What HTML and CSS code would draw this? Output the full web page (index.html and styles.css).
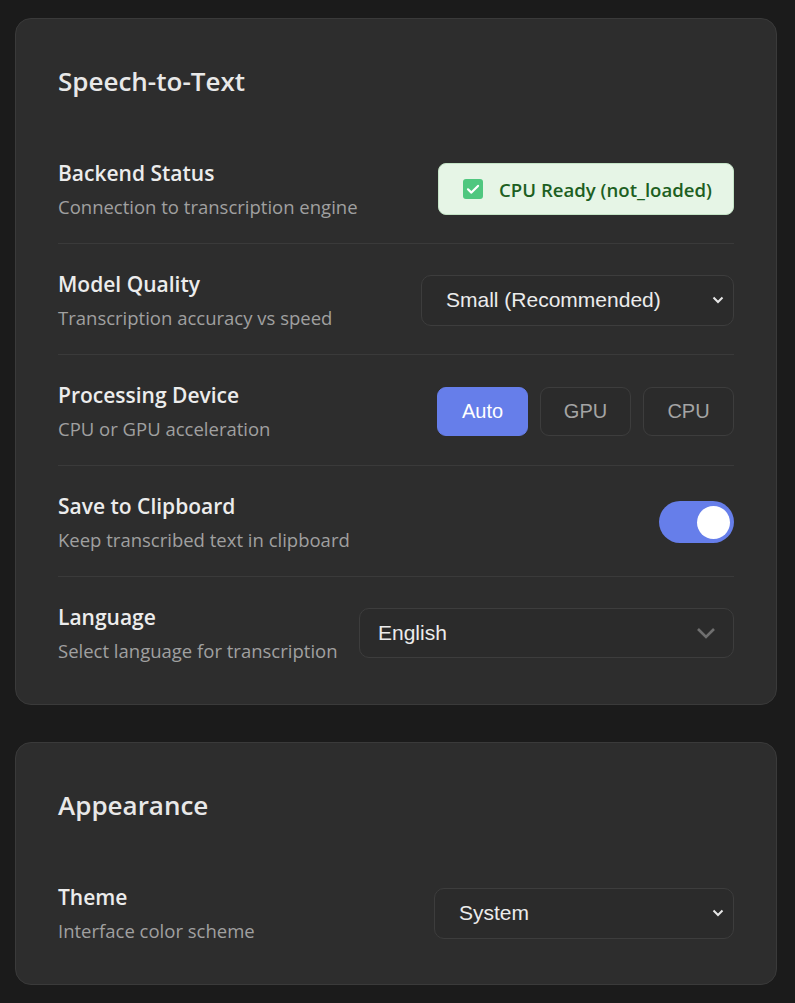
FILE: index.html
```html
<!DOCTYPE html>
<html lang="en">
<head>
<meta charset="utf-8">
<title>Settings</title>
<link rel="stylesheet" href="styles.css">
</head>
<body>
<main class="page">
  <section class="card">
    <h2 class="card-title">Speech-to-Text</h2>

    <div class="row">
      <div class="info">
        <div class="label">Backend Status</div>
        <div class="desc">Connection to transcription engine</div>
      </div>
      <div class="status">
        <svg class="check" width="20" height="20" viewBox="0 0 20 20" aria-hidden="true">
          <rect x="0" y="0" width="20" height="20" rx="3" fill="#4fc77f"/>
          <path d="M5 10.3 L8.4 13.6 L15 6.9" fill="none" stroke="#ffffff" stroke-width="2.2" stroke-linecap="round" stroke-linejoin="round"/>
        </svg>
        <span>CPU Ready (not_loaded)</span>
      </div>
    </div>

    <div class="row">
      <div class="info">
        <div class="label">Model Quality</div>
        <div class="desc">Transcription accuracy vs speed</div>
      </div>
      <div class="select select-model">
        <span>Small (Recommended)</span>
        <svg class="caret" width="12" height="8" viewBox="0 0 12 8" aria-hidden="true"><path d="M1.5 1.5 L6 6 L10.5 1.5" fill="none" stroke="#e6e6e6" stroke-width="2"/></svg>
      </div>
    </div>

    <div class="row">
      <div class="info">
        <div class="label">Processing Device</div>
        <div class="desc">CPU or GPU acceleration</div>
      </div>
      <div class="seg">
        <button class="seg-btn active">Auto</button>
        <button class="seg-btn">GPU</button>
        <button class="seg-btn">CPU</button>
      </div>
    </div>

    <div class="row">
      <div class="info">
        <div class="label">Save to Clipboard</div>
        <div class="desc">Keep transcribed text in clipboard</div>
      </div>
      <div class="toggle on"><span class="knob"></span></div>
    </div>

    <div class="row">
      <div class="info">
        <div class="label">Language</div>
        <div class="desc">Select language for transcription</div>
      </div>
      <div class="select select-lang">
        <span>English</span>
        <svg class="chev" width="20" height="12" viewBox="0 0 20 12" aria-hidden="true"><path d="M2 2 L10 10 L18 2" fill="none" stroke="#6f6f6f" stroke-width="2.6"/></svg>
      </div>
    </div>
  </section>

  <section class="card">
    <h2 class="card-title">Appearance</h2>
    <div class="row">
      <div class="info">
        <div class="label">Theme</div>
        <div class="desc">Interface color scheme</div>
      </div>
      <div class="select select-theme">
        <span>System</span>
        <svg class="caret" width="12" height="8" viewBox="0 0 12 8" aria-hidden="true"><path d="M1.5 1.5 L6 6 L10.5 1.5" fill="none" stroke="#e6e6e6" stroke-width="2"/></svg>
      </div>
    </div>
  </section>
</main>
</body>
</html>
```

FILE: styles.css
```css
* { box-sizing: border-box; }

html, body {
  margin: 0;
  background: #1b1b1b;
}

body {
  font-family: "Open Sans", "Noto Sans", sans-serif;
  color: #e8e8e8;
}

.page {
  display: flex;
  flex-direction: column;
  gap: 37px;
  padding: 18px 18px 18px 15px;
}

.card {
  background: #2d2d2d;
  border: 1px solid #3a3a3a;
  border-radius: 16px;
  padding: 42px 42px 40px 42px;
}

.card-title {
  margin: 0 0 32px;
  font-size: 26px;
  line-height: 40px;
  font-weight: 600;
  color: #e8e8e8;
}

.row {
  display: flex;
  align-items: center;
  justify-content: space-between;
  padding: 25px 0 23px;
  border-bottom: 1px solid #3a3a3a;
}

.row:last-child {
  border-bottom: none;
  padding-bottom: 0;
}

.info {
  display: flex;
  flex-direction: column;
  gap: 5px;
}

.label {
  font-size: 21px;
  line-height: 30px;
  font-weight: 600;
  color: #ececec;
}

.desc {
  font-size: 18.5px;
  line-height: 27px;
  color: #a0a0a0;
}

.status {
  display: flex;
  align-items: center;
  gap: 16px;
  height: 52px;
  padding: 0 21px 0 24px;
  background: #e6f5e6;
  border: 1px solid #c4e3c6;
  border-radius: 8px;
  color: #1d5f22;
  font-size: 18.6px;
  font-weight: 600;
}

.check { flex: none; }

.select {
  display: flex;
  align-items: center;
  justify-content: space-between;
  height: 51px;
  border: 1px solid #3d3d3d;
  border-radius: 10px;
  background: #2b2b2b;
  font-family: "Liberation Sans", Arial, sans-serif;
  font-size: 21px;
  color: #ececec;
}

.select-model {
  width: 313px;
  padding: 0 9px 0 24px;
}

.select-lang {
  width: 375px;
  height: 50px;
  padding: 0 17px 0 18px;
}

.select-theme {
  width: 300px;
  padding: 0 9px 0 24px;
}

.seg {
  display: flex;
  gap: 12px;
}

.seg-btn {
  width: 91px;
  height: 49px;
  border: 1px solid #3d3d3d;
  border-radius: 9px;
  background: #2b2b2b;
  color: #a4a4a4;
  font-family: "Liberation Sans", Arial, sans-serif;
  font-size: 20px;
  padding: 0;
}

.seg-btn.active {
  background: #667eea;
  border-color: #667eea;
  color: #ffffff;
}

.toggle {
  position: relative;
  width: 75px;
  height: 42px;
  border-radius: 21px;
  background: #667eea;
}

.knob {
  position: absolute;
  top: 5px;
  right: 4px;
  width: 33px;
  height: 33px;
  border-radius: 50%;
  background: #ffffff;
}
```
